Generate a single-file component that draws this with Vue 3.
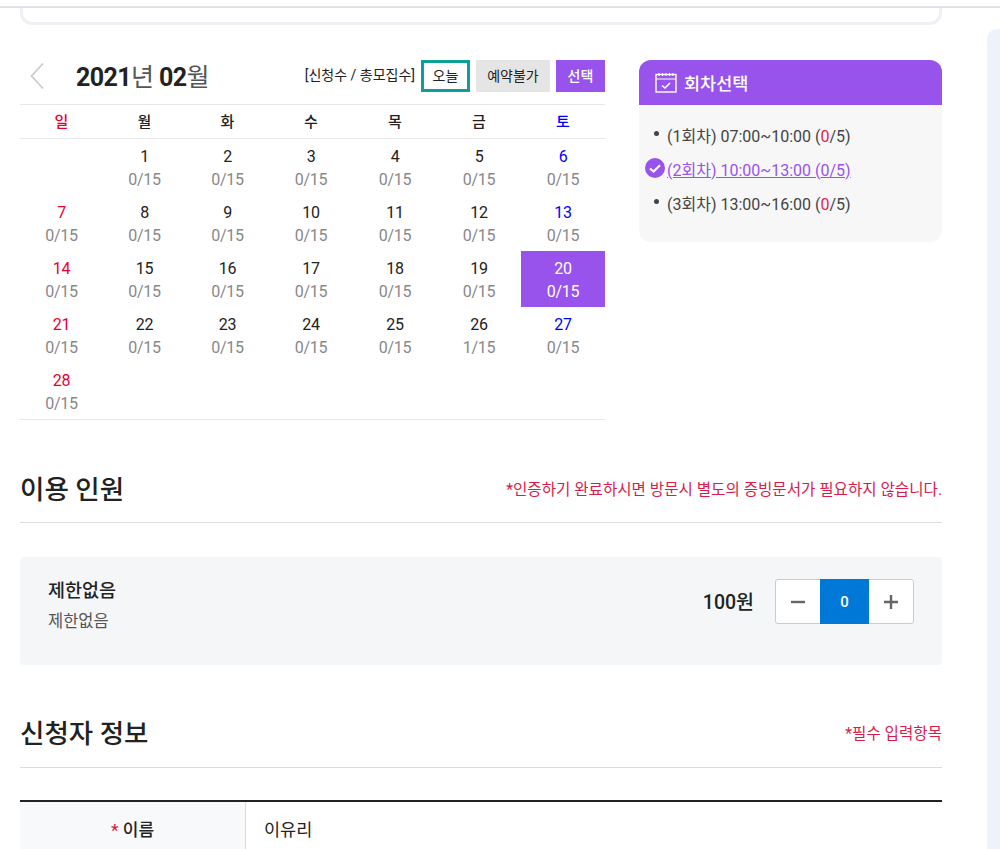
<script setup>
import { computed } from 'vue'

const dayNames = ['일', '월', '화', '수', '목', '금', '토']
const firstBlank = 1
const lastDay = 28
const selectedDay = 20

const cells = computed(() => {
  const list = []
  for (let i = 0; i < firstBlank; i++) list.push(null)
  for (let d = 1; d <= lastDay; d++) {
    list.push({ day: d, count: d === 26 ? '1/15' : '0/15' })
  }
  return list
})

const rounds = [
  { label: '(1회차) 07:00~10:00 (', picked: false },
  { label: '(2회차) 10:00~13:00 (', picked: true },
  { label: '(3회차) 13:00~16:00 (', picked: false },
]
</script>

<template>
  <div class="page">
    <div class="topline"></div>
    <div class="layout">
      <main class="content">
        <div class="prev-card"></div>

        <section class="booking">
          <div class="calendar">
            <div class="cal-head">
              <svg class="prev" width="16" height="28" viewBox="0 0 16 28">
                <path d="M14 1.5 L2.5 14 L14 26.5" fill="none" stroke="#c8c8c8" stroke-width="1.6" />
              </svg>
              <h2 class="month"><b>2021</b>년 <b>02</b>월</h2>
              <div class="legend">
                <span class="legend-note">[신청수 / 총모집수]</span>
                <span class="tag tag-today">오늘</span>
                <span class="tag tag-off">예약불가</span>
                <span class="tag tag-on">선택</span>
              </div>
            </div>

            <div class="week">
              <div v-for="(name, i) in dayNames" :key="name" class="week-name" :class="{ sun: i === 0, sat: i === 6 }">{{ name }}</div>
            </div>
            <div class="days">
              <div
                v-for="(cell, i) in cells"
                :key="i"
                class="day"
                :class="{ sun: i % 7 === 0, sat: i % 7 === 6, selected: cell && cell.day === selectedDay }"
              >
                <template v-if="cell">
                  <span class="num">{{ cell.day }}</span>
                  <span class="count">{{ cell.count }}</span>
                </template>
              </div>
            </div>
          </div>

          <aside class="rounds">
            <div class="rounds-title">
              <svg width="22" height="21" viewBox="0 0 22 21" fill="none" stroke="#fff">
                <rect x="1" y="2.5" width="20" height="17.5" stroke-width="1.4" />
                <path d="M1 7 H21" stroke-width="1.2" />
                <path d="M4 1 V4 M7.5 1 V4 M11 1 V4 M14.5 1 V4 M18 1 V4" stroke-width="1.2" />
                <path d="M7 13.5 L10 16 L15 11" stroke-width="1.6" />
              </svg>
              <span>회차선택</span>
            </div>
            <ul class="rounds-list">
              <li v-for="r in rounds" :key="r.label" :class="{ picked: r.picked }">
                <svg v-if="r.picked" class="check" width="20" height="20" viewBox="0 0 20 20">
                  <circle cx="10" cy="10" r="10" fill="#9853ed" />
                  <path d="M5 10.5 L8.6 13.6 L15 7.2" fill="none" stroke="#fff" stroke-width="2.2" />
                </svg>
                <span v-else class="dot"></span>
                <span class="round-text">{{ r.label }}<em>0</em>/5)</span>
              </li>
            </ul>
          </aside>
        </section>

        <section class="block people">
          <div class="block-head">
            <h3>이용 인원</h3>
            <p class="notice">*인증하기 완료하시면 방문시 별도의 증빙문서가 필요하지 않습니다.</p>
          </div>
          <div class="ticket">
            <div>
              <div class="ticket-name">제한없음</div>
              <div class="ticket-sub">제한없음</div>
            </div>
            <div class="ticket-right">
              <span class="price">100원</span>
              <div class="stepper">
                <button class="step">
                  <svg width="16" height="16" viewBox="0 0 16 16"><path d="M1 8 H15" stroke="#666" stroke-width="2.4" /></svg>
                </button>
                <span class="qty">0</span>
                <button class="step">
                  <svg width="16" height="16" viewBox="0 0 16 16"><path d="M1 8 H15 M8 1 V15" stroke="#666" stroke-width="2.4" /></svg>
                </button>
              </div>
            </div>
          </div>
        </section>

        <section class="block applicant">
          <div class="block-head">
            <h3>신청자 정보</h3>
            <p class="notice">*필수 입력항목</p>
          </div>
          <div class="form-table">
            <div class="form-label"><i>*</i> 이름</div>
            <div class="form-value">이유리</div>
          </div>
        </section>
      </main>
      <div class="side"></div>
    </div>
  </div>
</template>

<style>
html, body {
  margin: 0;
  background: #fff;
  overflow: hidden;
}
</style>

<style scoped>
.page {
  width: 1000px;
  height: 849px;
  overflow: hidden;
  font-family: Roboto, "Noto Sans CJK KR", sans-serif;
  color: #222;
  box-sizing: border-box;
}
.topline {
  height: 2px;
  margin-top: 6px;
  background: #e0e0e6;
}
.layout {
  display: flex;
}
.content {
  width: 922px;
  margin-left: 20px;
}
.side {
  width: 13px;
  flex: 1;
  margin: 21px 0 0 45px;
  height: 900px;
  background: #eef2fb;
  border-radius: 10px 0 0 0;
}
.prev-card {
  height: 17px;
  border: 3px solid #eef0f4;
  border-top: none;
  border-radius: 0 0 12px 12px;
  box-sizing: border-box;
}

.booking {
  display: flex;
  justify-content: space-between;
  margin-top: 35px;
}
.calendar {
  width: 585px;
}
.cal-head {
  display: flex;
  align-items: center;
  height: 32px;
  margin-bottom: 12px;
}
.prev {
  margin-left: 9px;
}
.month {
  margin: 0 0 2px 31px;
  font-size: 25px;
  font-weight: 400;
  color: #555;
  letter-spacing: -0.6px;
}
.month b {
  font-weight: 700;
  color: #222;
}
.legend {
  display: flex;
  align-items: center;
  margin-left: auto;
}
.legend-note {
  font-size: 14px;
  margin-right: 6px;
  margin-top: -5px;
}
.tag {
  display: flex;
  align-items: center;
  justify-content: center;
  height: 32px;
  padding-bottom: 2px;
  font-size: 14px;
  box-sizing: border-box;
}
.tag-today {
  width: 49px;
  border: 3px solid #0f9f9a;
}
.tag-off {
  width: 74px;
  margin-left: 6px;
  background: #e5e5e5;
}
.tag-on {
  width: 49px;
  margin-left: 6px;
  background: #9853ed;
  color: #fff;
  font-weight: 500;
}

.week {
  display: grid;
  grid-template-columns: 83px 83px 83px 84px 84px 84px 84px;
  height: 33px;
  border-top: 1px solid #e8e8e8;
  border-bottom: 1px solid #e8e8e8;
  box-sizing: content-box;
}
.week-name {
  text-align: center;
  font-size: 15px;
  font-weight: 500;
  line-height: 34px;
}
.days {
  display: grid;
  grid-template-columns: 83px 83px 83px 84px 84px 84px 84px;
  grid-auto-rows: 56px;
  border-bottom: 1px solid #e8e8e8;
}
.day {
  display: flex;
  flex-direction: column;
  align-items: center;
  padding-top: 7px;
  font-size: 16px;
  letter-spacing: -0.3px;
  line-height: 22px;
  box-sizing: border-box;
}
.count {
  font-size: 16px;
  color: #888;
  margin-top: 0;
  line-height: 24px;
}
.week-name.sun, .day.sun .num {
  color: #e6002d;
}
.week-name.sat, .day.sat .num {
  color: #0000ff;
}
.day.selected {
  background: #9853ed;
}
.day.selected .num, .day.selected .count {
  color: #fff;
}

.rounds {
  width: 303px;
  height: 182px;
  background: #f7f7f7;
  border-radius: 12px;
  overflow: hidden;
}
.rounds-title {
  display: flex;
  align-items: center;
  gap: 7px;
  height: 45px;
  padding-left: 16px;
  background: #9853ed;
  color: #fff;
  font-size: 17.5px;
  font-weight: 500;
}
.rounds-list {
  list-style: none;
  margin: 12px 0 0;
  padding: 0;
  font-size: 16px;
  color: #444;
}
.rounds-list li {
  display: flex;
  align-items: center;
  height: 34px;
  padding-left: 28px;
  position: relative;
}
.dot {
  position: absolute;
  left: 15px;
  top: 14px;
  width: 5px;
  height: 5px;
  border-radius: 50%;
  background: #444;
}
.check {
  position: absolute;
  left: 6px;
  top: 7px;
}
.round-text {
  padding-top: 1px;
}
.round-text em {
  font-style: normal;
  color: #e6214f;
}
.picked .round-text {
  color: #9853ed;
  text-decoration: underline;
}
.picked .round-text em {
  color: #9853ed;
}

.block-head {
  display: flex;
  align-items: center;
  justify-content: space-between;
  height: 72px;
  border-bottom: 1px solid #dcdcdc;
}
.block-head h3 {
  margin: 0;
  font-size: 26.5px;
  font-weight: 500;
  color: #222;
}
.notice {
  margin: 2px 0 0;
  font-size: 15.6px;
  color: #d81b4a;
}
.people {
  margin-top: 30px;
}
.people .block-head {
  height: 70px;
  padding-top: 2px;
}
.ticket {
  display: flex;
  justify-content: space-between;
  height: 108px;
  margin-top: 34px;
  padding: 22px 28px 0;
  box-sizing: border-box;
  background: #f5f6f8;
  border-radius: 4px;
}
.ticket-name {
  font-size: 18.5px;
  font-weight: 500;
  line-height: 24px;
}
.ticket-sub {
  font-size: 16.5px;
  color: #555;
  margin-top: 8px;
  line-height: 22px;
}
.ticket-right {
  display: flex;
  align-items: flex-start;
}
.price {
  font-size: 19.5px;
  font-weight: 500;
  line-height: 47px;
  margin-right: 21px;
}
.stepper {
  display: flex;
  width: 139px;
  height: 45px;
  box-sizing: border-box;
  border: 1px solid #ccc;
  border-radius: 3px;
  background: #fff;
}
.step {
  flex: 1;
  display: flex;
  align-items: center;
  justify-content: center;
  padding: 0;
  border: none;
  background: none;
}
.qty {
  width: 49px;
  margin: -1px 0;
  background: #0078d7;
  color: #fff;
  font-size: 15px;
  font-weight: 500;
  line-height: 47px;
  text-align: center;
}
.applicant {
  margin-top: 30px;
}
.form-table {
  display: flex;
  margin-top: 32px;
  border-top: 2px solid #222;
  height: 60px;
}
.form-label {
  width: 225px;
  background: #f8f9fb;
  border-right: 1px solid #dcdcdc;
  text-align: center;
  font-size: 17px;
  font-weight: 500;
  line-height: 56px;
}
.form-label i {
  font-style: normal;
  color: #d81b4a;
}
.form-value {
  padding-left: 18px;
  font-size: 17.5px;
  line-height: 56px;
}
</style>
